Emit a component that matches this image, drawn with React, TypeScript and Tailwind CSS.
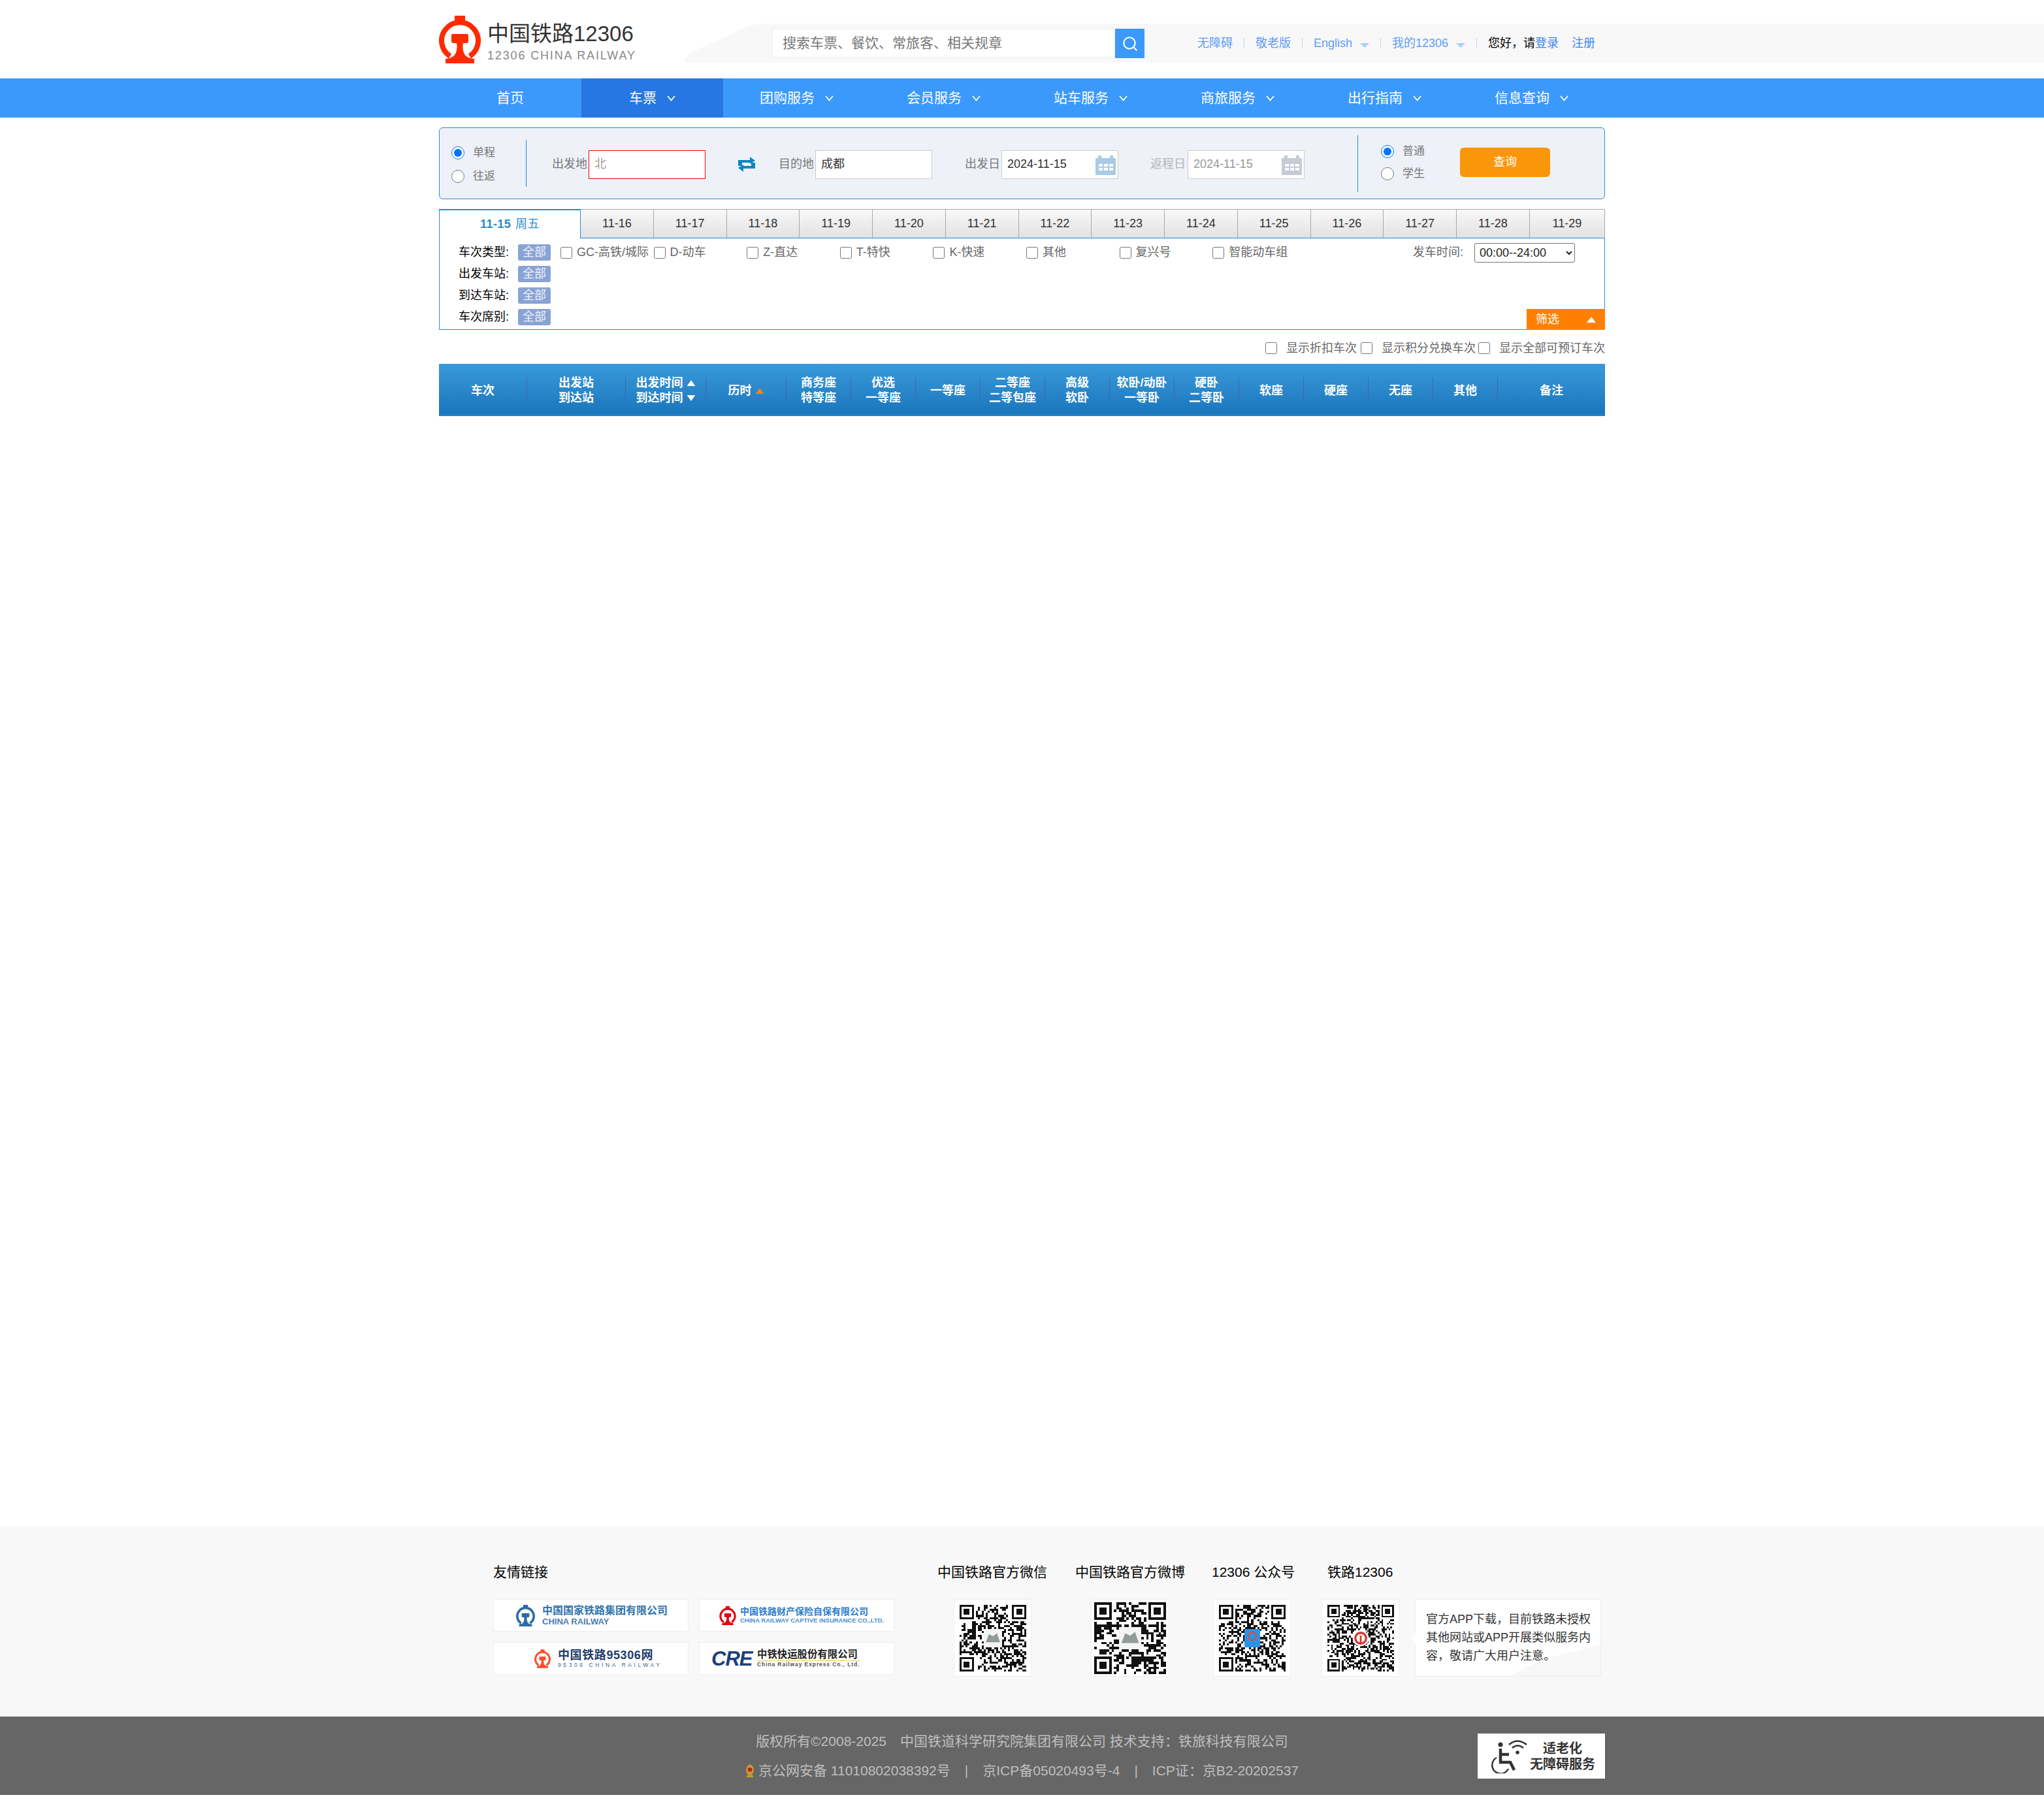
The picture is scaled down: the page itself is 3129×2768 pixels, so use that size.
import { Search } from "lucide-react";

const navItems = [
  { label: "首页", width: "w-[218px]" },
  { label: "车票", width: "w-[217px]", arrow: true, active: true },
  { label: "团购服务", width: "w-[225px]", arrow: true },
  { label: "会员服务", width: "w-[225px]", arrow: true },
  { label: "站车服务", width: "w-[225px]", arrow: true },
  { label: "商旅服务", width: "w-[225px]", arrow: true },
  { label: "出行指南", width: "w-[225px]", arrow: true },
  { label: "信息查询", width: "w-[225px]", arrow: true },
];

const dates = ["11-16", "11-17", "11-18", "11-19", "11-20", "11-21", "11-22", "11-23", "11-24", "11-25", "11-26", "11-27", "11-28"];
const trainTypes = ["GC-高铁/城际", "D-动车", "Z-直达", "T-特快", "K-快速", "其他", "复兴号", "智能动车组"];
const filterRows = ["出发车站:", "到达车站:", "车次席别:"];

const comma = "\uFF0C";
const colon = "\uFF1A";

const columns = [
  { lines: ["车次"], width: "w-[135px]" },
  { lines: ["出发站", "到达站"], width: "w-[151px]" },
  { lines: ["出发时间", "到达时间"], width: "w-[123px]", sort: "both" },
  { lines: ["历时"], width: "w-[123px]", sort: "orange" },
  { lines: ["商务座", "特等座"], width: "w-[99px]" },
  { lines: ["优选", "一等座"], width: "w-[99px]" },
  { lines: ["一等座"], width: "w-[99px]" },
  { lines: ["二等座", "二等包座"], width: "w-[99px]" },
  { lines: ["高级", "软卧"], width: "w-[99px]" },
  { lines: ["软卧/动卧", "一等卧"], width: "w-[99px]" },
  { lines: ["硬卧", "二等卧"], width: "w-[99px]" },
  { lines: ["软座"], width: "w-[99px]" },
  { lines: ["硬座"], width: "w-[99px]" },
  { lines: ["无座"], width: "w-[99px]" },
  { lines: ["其他"], width: "w-[99px]" },
  { lines: ["备注"], width: "w-[164px]", last: true },
];

function RailLogo({ color, className }: { color: string; className: string }) {
  return (
    <svg viewBox="0 0 64 73" className={className}>
      <rect x="24" y="0" width="16" height="9" fill={color} />
      <path d="M17 62 A28 28 0 1 1 47 62" fill="none" stroke={color} strokeWidth="8" />
      <path
        d="M21 28 H43 Q45 28 45 30 V39 Q45 42 42 42 H38 Q36.5 42 36.5 46 C36.5 58 40 65 54 66 V73 H10 V66 C24 65 27.5 58 27.5 46 Q27.5 42 26 42 H22 Q19 42 19 39 V30 Q19 28 21 28Z"
        fill={color}
      />
    </svg>
  );
}

function Chevron() {
  return (
    <svg viewBox="0 0 13 9" className="ml-[16px] h-[9px] w-[13px]">
      <path d="M1 1 L6.5 7.5 L12 1" fill="none" stroke="#fff" strokeWidth="1.8" />
    </svg>
  );
}

function SmallTriangle() {
  return (
    <svg viewBox="0 0 14 7" className="ml-[12px] mt-[6px] h-[7px] w-[14px]">
      <path d="M0 0 H14 L7 7Z" fill="#a9d0fb" />
    </svg>
  );
}

function Sep() {
  return <span className="h-[16px] w-px bg-[#bcd7f5]" />;
}

function CalendarIcon({ color }: { color: string }) {
  return (
    <svg viewBox="0 0 31 30" className="absolute right-[4px] top-[8px] h-[30px] w-[31px]">
      <rect x="0" y="4" width="31" height="26" rx="1" fill={color} />
      <rect x="4" y="0" width="5" height="7" fill={color} />
      <rect x="22" y="0" width="5" height="7" fill={color} />
      <g fill="#fff">
        <rect x="5" y="13" width="6" height="4" />
        <rect x="13" y="13" width="6" height="4" />
        <rect x="21" y="13" width="6" height="4" />
        <rect x="5" y="19" width="6" height="4" />
        <rect x="13" y="19" width="6" height="4" />
        <rect x="21" y="19" width="6" height="4" />
      </g>
    </svg>
  );
}

function Field({ value, state }: { value: string; state?: "error" | "off" }) {
  const look =
    state === "error"
      ? "border-[#ff0000] text-[#a39b91]"
      : state === "off"
        ? "border-[#cccccc] text-[#999999]"
        : "border-[#cccccc] text-[#333333]";
  return (
    <div className={`flex h-[44px] w-[179px] items-center border bg-white pl-[8px] text-[18px] ${look}`}>{value}</div>
  );
}

function Label({ text, className }: { text: string; className: string }) {
  return <span className={`mt-[3px] w-[54px] shrink-0 text-[18px] ${className}`}>{text}</span>;
}

function Radio({ label, group, checked }: { label: string; group: string; checked?: boolean }) {
  return (
    <label className="flex h-[20px] items-center gap-[13px] text-[17px] text-[#777777]">
      <input type="radio" name={group} defaultChecked={checked} className="m-0 h-[20px] w-[20px]" />
      {label}
    </label>
  );
}

function Triangle({ down, color }: { down?: boolean; color: string }) {
  return (
    <svg viewBox="0 0 14 10" className="ml-[5px] h-[9px] w-[14px] shrink-0">
      <path d={down ? "M0 0 H14 L7 10Z" : "M7 0 L14 10 H0Z"} fill={color} />
    </svg>
  );
}

// pseudo random modules, the picture only needs to read as a qr code
function qrPath(size: number, seed: number) {
  let s = seed;
  const next = () => {
    s = (s * 1664525 + 1013904223) % 4294967296;
    return s / 4294967296;
  };
  const inFinder = (x: number, y: number) =>
    (x < 8 && y < 8) || (x >= size - 8 && y < 8) || (x < 8 && y >= size - 8);
  let d = "";
  for (let y = 0; y < size; y++) {
    for (let x = 0; x < size; x++) {
      if (!inFinder(x, y) && next() > 0.52) d += `M${x} ${y}h1v1h-1z`;
    }
  }
  const finder = (x: number, y: number) =>
    `M${x} ${y}h7v7h-7zM${x + 1} ${y + 1}v5h5v-5zM${x + 2} ${y + 2}h3v3h-3z`;
  return d + finder(0, 0) + finder(size - 7, 0) + finder(0, size - 7);
}

function Qr({ size, seed, px, logo }: { size: number; seed: number; px: string; logo: "photo" | "app" | "rail" }) {
  const c = size / 2;
  return (
    <svg viewBox={`0 0 ${size} ${size}`} className={px} shapeRendering="crispEdges">
      <path d={qrPath(size, seed)} fill="#111" fillRule="evenodd" />
      {logo === "photo" && (
        <g>
          <rect x={c - 4.5} y={c - 4.5} width="9" height="9" fill="#f4f4f4" />
          <path d={`M${c - 3.5} ${c + 2}L${c - 2} ${c - 2}L${c} ${c - 1}L${c + 2} ${c - 2.5}L${c + 3.5} ${c + 2}Z`} fill="#8f9d96" shapeRendering="auto" />
        </g>
      )}
      {logo === "app" && (
        <g>
          <rect x={c - 4} y={c - 4.5} width="8" height="9" rx="1" fill="#2b93e6" />
          <circle cx={c} cy={c - 1} r="2" fill="none" stroke="#e8452c" strokeWidth="0.6" shapeRendering="auto" />
        </g>
      )}
      {logo === "rail" && (
        <g shapeRendering="auto">
          <circle cx={c} cy={c} r="4.5" fill="#fff" />
          <circle cx={c} cy={c} r="3" fill="none" stroke="#d8342c" strokeWidth="1.2" />
          <rect x={c - 0.5} y={c - 1.5} width="1" height="4" fill="#d8342c" />
        </g>
      )}
    </svg>
  );
}

function QrBox({ width, margin, children }: { width: string; margin: string; children: React.ReactNode }) {
  return (
    <div className={`flex h-[119px] shrink-0 items-center justify-center border border-[#eeeeee] bg-white ${width} ${margin}`}>
      {children}
    </div>
  );
}

function WheelchairIcon() {
  return (
    <svg viewBox="0 0 56 52" className="h-[52px] w-[56px]">
      <circle cx="15" cy="8" r="3.6" fill="#333" />
      <path d="M15 14 V35 H30 L36 47 M15 23 H28" fill="none" stroke="#333" strokeWidth="4.5" />
      <path d="M9 28 A13 13 0 1 0 27 45" fill="none" stroke="#333" strokeWidth="2.4" />
      <circle cx="41" cy="20" r="2.8" fill="#333" />
      <path d="M28 8 Q41 -3 55 8 M33 13 Q41 6 50 13" fill="none" stroke="#333" strokeWidth="2.6" />
    </svg>
  );
}

export default function App() {
  return (
    <div className="flex min-h-[2768px] flex-col bg-white pb-[20px] font-['Liberation_Sans','Noto_Sans_CJK_SC',sans-serif] text-[#333333]">
      <header className="flex h-[120px]">
        <div className="ml-[672px] flex w-[376px] shrink-0 items-start pt-[24px]">
          <RailLogo color="#ff2a00" className="h-[73px] w-[64px] shrink-0" />
          <div className="ml-[10px] mt-[11px]">
            <div className="text-[33px] leading-[34px] whitespace-nowrap text-[#333333]">中国铁路12306</div>
            <div className="mt-[7px] text-[18px] leading-[18px] tracking-[1.85px] whitespace-nowrap text-[#888888]">12306 CHINA RAILWAY</div>
          </div>
        </div>
        <div className="mt-[36px] flex h-[60px] flex-1">
          <svg viewBox="0 0 134 60" className="h-[60px] w-[134px] shrink-0">
            <path d="M134 0 H130 C110 0 95 3 83 11 L10 44 Q0 50 0 57 Q0 60 8 60 H134Z" fill="#f8f8f8" />
          </svg>
          <div className="flex flex-1 items-start bg-[#f8f8f8] pt-[8px]">
            <div className="flex h-[44px] w-[525px] items-center border border-[#eeeeee] bg-white pl-[15px] text-[21px] text-[#777777]">
              搜索车票、餐饮、常旅客、相关规章
            </div>
            <div className="flex h-[45px] w-[45px] items-center justify-center bg-[#3b99fc]">
              <Search className="h-[26px] w-[26px] text-white" strokeWidth={2} />
            </div>
            <div className="ml-[81px] flex h-[44px] items-center gap-[17px] text-[18px] whitespace-nowrap text-[#5f9df5]">
              <span>无障碍</span>
              <Sep />
              <span>敬老版</span>
              <Sep />
              <span className="flex items-center">English<SmallTriangle /></span>
              <Sep />
              <span className="flex items-center">我的12306<SmallTriangle /></span>
              <Sep />
              <span className="text-black">您好{comma}请<span className="text-[#3b85f0]">登录</span></span>
              <span className="ml-[3px] text-[#3b85f0]">注册</span>
            </div>
          </div>
        </div>
      </header>

      <nav className="h-[60px] bg-[#3b99fc]">
        <div className="mx-auto flex h-full w-[1785px]">
          {navItems.map((item) => (
            <div
              key={item.label}
              className={`flex h-full items-center justify-center text-[21px] text-white ${item.width} ${item.active ? "bg-[#2676e3]" : ""}`}
            >
              {item.label}
              {item.arrow && <Chevron />}
            </div>
          ))}
        </div>
      </nav>

      <main className="mx-auto w-[1785px]">
        <section className="mt-[15px] flex h-[110px] items-center rounded-[6px] border border-[#298cce] bg-[#eef1f8]">
          <div className="mt-[3px] flex w-[132px] shrink-0 flex-col gap-[16px] pl-[18px]">
            <Radio label="单程" group="trip" checked />
            <Radio label="往返" group="trip" />
          </div>
          <div className="h-[72px] w-px shrink-0 bg-[#298cce]" />
          <div className="ml-[39px] flex items-center">
            <Label text="出发地" className="text-[#777777]" />
            <div className="ml-[2px] mt-[3px]"><Field value="北" state="error" /></div>
            <svg viewBox="0 0 26 23" className="ml-[50px] mt-[3px] h-[23px] w-[26px] shrink-0">
              <path d="M0 5 H18 V0 L26 6 L18 11 V9 H6 V14 H0 Z" fill="#0f86c2" />
              <path d="M26 18 H8 V23 L0 17 L8 12 V14 H20 V9 H26 Z" fill="#0f86c2" />
            </svg>
            <Label text="目的地" className="ml-[36px] text-[#777777]" />
            <div className="ml-[2px] mt-[3px]"><Field value="成都" /></div>
            <Label text="出发日" className="ml-[50px] text-[#777777]" />
            <div className="relative ml-[2px] mt-[3px]">
              <Field value="2024-11-15" />
              <CalendarIcon color="#a9cbe8" />
            </div>
            <Label text="返程日" className="ml-[49px] text-[#b5b5b5]" />
            <div className="relative ml-[3px] mt-[3px]">
              <Field value="2024-11-15" state="off" />
              <CalendarIcon color="#c6cbd6" />
            </div>
          </div>
          <div className="ml-[81px] h-[87px] w-px shrink-0 bg-[#298cce]" />
          <div className="ml-[35px] -mt-[3px] flex flex-col gap-[14px]">
            <Radio label="普通" group="passenger" checked />
            <Radio label="学生" group="passenger" />
          </div>
          <div className="ml-[54px] -mt-[4px] flex h-[45px] w-[138px] items-center justify-center rounded-[6px] bg-[#fa960a] text-[18px] text-white">
            查询
          </div>
        </section>

        <div className="relative z-10 mt-[15px] flex h-[45px]">
          <div className="flex h-[45px] w-[217px] shrink-0 items-center justify-center gap-[7px] border-x border-t-2 border-x-[#298cce] border-t-[#298cce] bg-white text-[18px] font-bold tracking-[0.4px] text-[#298cce]">
            11-15 <span className="font-normal">周五</span>
          </div>
          {dates.map((date) => (
            <div
              key={date}
              className="flex h-[44px] w-[111.75px] shrink-0 items-center justify-center border-r border-t border-[#a9a9a9] bg-gradient-to-b from-[#f8f8f8] to-[#e2e2e2] text-[18px] text-[#333333]"
            >
              {date}
            </div>
          ))}
          <div className="flex h-[44px] flex-1 items-center justify-center border-r border-t border-[#a9a9a9] bg-gradient-to-b from-[#f8f8f8] to-[#e2e2e2] text-[18px] text-[#333333]">
            11-29
          </div>
        </div>

        <section className="relative -mt-px h-[141px] border border-[#298cce] pt-[5px]">
          <div className="flex h-[33px] items-center">
            <span className="ml-[29px] w-[91px] text-[18px] text-black">车次类型:</span>
            <span className="flex h-[25px] w-[50px] items-center justify-center rounded-[3px] bg-[#8aa3d5] text-[18px] text-[#eef2fa]">全部</span>
            <div className="ml-[15px] flex">
              {trainTypes.map((type) => (
                <label key={type} className="flex w-[142.6px] items-center gap-[7px] text-[18px] whitespace-nowrap text-[#666666]">
                  <input type="checkbox" className="m-0 h-[18px] w-[18px]" />
                  {type}
                </label>
              ))}
            </div>
            <div className="ml-auto mr-[45px] flex items-center gap-[17px]">
              <span className="text-[18px] text-[#666666]">发车时间:</span>
              <select className="h-[30px] w-[154px] rounded-[3px] border border-[#767676] bg-white pl-[3px] text-[18px] text-[#222222]" defaultValue="all">
                <option value="all">00:00--24:00</option>
              </select>
            </div>
          </div>
          {filterRows.map((row) => (
            <div key={row} className="flex h-[33px] items-center">
              <span className="ml-[29px] w-[91px] text-[18px] text-black">{row}</span>
              <span className="flex h-[25px] w-[50px] items-center justify-center rounded-[3px] bg-[#8aa3d5] text-[18px] text-[#eef2fa]">全部</span>
            </div>
          ))}
          <div className="absolute -bottom-px -right-px flex h-[32px] w-[120px] items-center justify-between bg-[#ff8000] px-[14px] text-[18px] text-white">
            筛选
            <svg viewBox="0 0 14 9" className="h-[9px] w-[14px]">
              <path d="M7 0 L14 9 H0Z" fill="#fff" />
            </svg>
          </div>
        </section>

        <div className="flex h-[52px] items-center justify-end pt-[4px] text-[18px] whitespace-nowrap text-[#666666]">
          <label className="flex items-center gap-[14px]"><input type="checkbox" className="m-0 h-[18px] w-[18px]" />显示折扣车次</label>
          <label className="ml-[6px] flex items-center gap-[14px]"><input type="checkbox" className="m-0 h-[18px] w-[18px]" />显示积分兑换车次</label>
          <label className="ml-[4px] flex items-center gap-[14px]"><input type="checkbox" className="m-0 h-[18px] w-[18px]" />显示全部可预订车次</label>
        </div>

        <div className="flex h-[80px] items-center border-b-[3px] border-[#2182c6] bg-gradient-to-b from-[#3a9ad9] to-[#1a76bd] pt-[3px] text-[18px] leading-[23px] font-bold text-white">
          {columns.map((col) => (
            <div
              key={col.lines.join()}
              className={`flex h-[38px] shrink-0 flex-col items-center justify-center pt-[2px] ${col.width} ${col.last ? "" : "border-r border-[#3c6aa8]"}`}
            >
              {col.lines.map((line, i) => (
                <div key={line} className="flex items-center whitespace-nowrap">
                  {line}
                  {col.sort === "both" && <Triangle down={i === 1} color="#fff" />}
                  {col.sort === "orange" && <Triangle color="#f08030" />}
                </div>
              ))}
            </div>
          ))}
        </div>
      </main>

      <footer className="mt-auto">
        <div className="h-[291px] bg-[#f8f8f8]">
          <div className="mx-auto flex w-[1785px] pl-[83px] pt-[55px]">
            <div className="w-[680px] shrink-0">
              <div className="text-[21px] leading-[30px] text-black">友情链接</div>
              <div className="mt-[26px] grid w-[615px] grid-cols-[299px_299px] gap-x-[16px] gap-y-[16px]">
                <div className="flex h-[50px] items-center border border-[#eeeeee] bg-white pl-[34px]">
                  <RailLogo color="#2b6ba6" className="h-[33px] w-[29px] shrink-0" />
                  <div className="ml-[11px] whitespace-nowrap">
                    <div className="text-[16px] leading-[20px] font-bold text-[#3075ad]">中国国家铁路集团有限公司</div>
                    <div className="text-[13px] leading-[14px] font-bold text-[#4a80ad]">CHINA RAILWAY</div>
                  </div>
                </div>
                <div className="flex h-[50px] items-center border border-[#eeeeee] bg-white pl-[30px]">
                  <RailLogo color="#e60012" className="h-[29px] w-[26px] shrink-0" />
                  <div className="ml-[6px] whitespace-nowrap">
                    <div className="text-[14px] leading-[16px] font-bold text-[#2d7dc9]">中国铁路财产保险自保有限公司</div>
                    <div className="text-[9.5px] leading-[12px] font-bold text-[#4a8fd0]">CHINA RAILWAY CAPTIVE INSURANCE CO.,LTD.</div>
                  </div>
                </div>
                <div className="flex h-[50px] items-center border border-[#eeeeee] bg-white pl-[62px]">
                  <RailLogo color="#ff4a2a" className="h-[29px] w-[25px] shrink-0" />
                  <div className="ml-[11px] whitespace-nowrap">
                    <div className="text-[18px] leading-[20px] font-bold tracking-[0.6px] text-[#1f3d6b]">中国铁路95306网</div>
                    <div className="text-[8.5px] leading-[11px] tracking-[3.6px] text-[#4a6488]">95306 CHINA RAILWAY</div>
                  </div>
                </div>
                <div className="flex h-[50px] items-center border border-[#eeeeee] bg-white pl-[18px]">
                  <span className="w-[70px] text-[31px] leading-none font-bold italic tracking-[-1px] text-[#1f3f7a]">CRE</span>
                  <div className="whitespace-nowrap">
                    <div className="border-b border-[#f7c94b] text-[15.4px] leading-[18px] font-bold text-[#222222]">中铁快运股份有限公司</div>
                    <div className="text-[8.5px] leading-[11px] font-bold tracking-[0.9px] text-[#555555]">China Railway Express Co., Ltd.</div>
                  </div>
                </div>
              </div>
            </div>

            <div>
              <div className="flex text-[21px] leading-[30px] whitespace-nowrap text-black">
                <span className="w-[211px]">中国铁路官方微信</span>
                <span className="w-[209px]">中国铁路官方微博</span>
                <span className="w-[177px]">12306 公众号</span>
                <span>铁路12306</span>
              </div>
              <div className="mt-[26px] flex">
                <QrBox width="w-[119px]" margin="ml-[25px]"><Qr size={33} seed={11} px="h-[102px] w-[102px]" logo="photo" /></QrBox>
                <QrBox width="w-[120px]" margin="ml-[91px]"><Qr size={29} seed={29} px="h-[110px] w-[110px]" logo="photo" /></QrBox>
                <QrBox width="w-[119px]" margin="ml-[67px]"><Qr size={33} seed={47} px="h-[102px] w-[102px]" logo="app" /></QrBox>
                <QrBox width="w-[119px]" margin="ml-[47px]"><Qr size={37} seed={83} px="h-[102px] w-[102px]" logo="rail" /></QrBox>
                <div className="relative ml-[24px] h-[119px] w-[285px] shrink-0 border border-[#eeeeee] bg-white pl-[16px] pt-[16px] text-[18px] leading-[28px] text-[#333333]">
                  <svg viewBox="0 0 7 18" className="absolute -left-[7px] top-[50px] h-[18px] w-[7px]">
                    <path d="M7 0 L0 9 L7 18Z" fill="#fff" />
                  </svg>
                  <svg viewBox="0 0 210 50" className="absolute bottom-0 right-0 h-[50px] w-[210px]">
                    <path d="M70 50 L110 30 Q140 18 175 12 L210 2 V50Z" fill="#f8f8f8" />
                  </svg>
                  <p className="relative w-[256px]">官方APP下载{comma}目前铁路未授权其他网站或APP开展类似服务内容{comma}敬请广大用户注意。</p>
                </div>
              </div>
            </div>
          </div>
        </div>

        <div className="h-[120px] bg-[#666666]">
          <div className="mx-auto flex w-[1785px]">
            <div className="w-[195px] shrink-0" />
            <div className="flex-1 pt-[15px] text-center text-[21px] leading-[45px] whitespace-nowrap text-[#bfbfbf]">
              <div>版权所有©2008-2025<span className="ml-[21px]">中国铁道科学研究院集团有限公司 技术支持{colon}铁旅科技有限公司</span></div>
              <div className="flex items-center justify-center">
                <svg viewBox="0 0 16 24" className="mr-[6px] h-[20px] w-[14px]">
                  <path d="M8 0 Q15 3 15 11 Q15 18 8 21 Q1 18 1 11 Q1 3 8 0Z" fill="#c9992e" />
                  <circle cx="8" cy="10" r="4" fill="#b3261e" />
                  <rect x="2" y="20" width="12" height="4" rx="1" fill="#c9992e" />
                </svg>
                京公网安备 11010802038392号
                <span className="mx-[22px]">|</span>
                京ICP备05020493号-4
                <span className="mx-[22px]">|</span>
                ICP证{colon}京B2-20202537
              </div>
            </div>
            <div className="mt-[26px] flex h-[69px] w-[195px] shrink-0 items-center bg-white pl-[20px]">
              <WheelchairIcon />
              <div className="ml-[4px] text-center text-[20px] leading-[24px] font-bold whitespace-nowrap text-[#333333]">
                适老化
                <br />
                无障碍服务
              </div>
            </div>
          </div>
        </div>
      </footer>
    </div>
  );
}
